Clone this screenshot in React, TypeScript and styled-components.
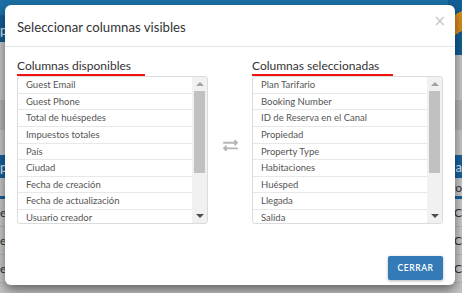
import React from "react";
import styled, { createGlobalStyle } from "styled-components";
import { FaExchangeAlt } from "react-icons/fa";

const GlobalStyle = createGlobalStyle`
  html, body {
    margin: 0;
    padding: 0;
  }
  body {
    width: 462px;
    height: 293px;
    overflow: hidden;
    font-family: "Lato", "Open Sans", sans-serif;
  }
`;

// page behind the dialog (already dimmed by the backdrop)
const Page = styled.div`
  position: relative;
  width: 462px;
  height: 293px;
  background: #c6c6c6;
  overflow: hidden;
`;

const NavBar = styled.div`
  height: 42px;
  background: linear-gradient(#1b70a6 0, #1b70a6 15px, #125f97 15px);
  display: flex;
  align-items: flex-end;
  justify-content: space-between;
  padding-bottom: 4px;
  box-sizing: border-box;
  color: #e8eef4;
  font-size: 13px;
`;

const Ribbon = styled.div`
  width: 14px;
  height: 55px;
  align-self: flex-start;
  background: linear-gradient(150deg, #125f97 0 30%, #d98f1c 30% 62%, #125f97 62%);
`;

const Band = styled.div<{ $h: number; $bg: string }>`
  height: ${(p) => p.$h}px;
  background: ${(p) => p.$bg};
`;

const TableHead = styled.div`
  height: 23px;
  background: #1762a0;
  color: #e8eef4;
  font-size: 13px;
  display: flex;
  align-items: center;
  justify-content: space-between;
`;

const SubHead = styled.div`
  height: 18px;
  background: #c9c9c9;
  border-bottom: 3px solid #1762a0;
  color: #333;
  font-size: 12px;
  display: flex;
  align-items: center;
  justify-content: flex-end;
`;

const Row = styled.div`
  height: 27px;
  background: #cbcbcb;
  border-bottom: 1px solid #b8b8b8;
  color: #333;
  font-size: 12px;
  display: flex;
  align-items: center;
  justify-content: space-between;
`;

// dialog
const Modal = styled.div`
  position: absolute;
  top: 5px;
  left: 5px;
  width: 450px;
  height: 280px;
  background: #fff;
  border-radius: 6px;
  box-shadow: 0 5px 12px rgba(0, 0, 0, 0.5);
  display: flex;
  flex-direction: column;
`;

const Header = styled.div`
  height: 41px;
  padding: 0 9px 0 12px;
  display: flex;
  align-items: center;
  justify-content: space-between;
  border-bottom: 1px solid #e5e5e5;
`;

const Title = styled.div`
  font-size: 13.2px;
  color: #333;
  margin-top: 2px;
`;

const Close = styled.span`
  color: #c8c8c8;
  font-size: 15px;
  line-height: 1;
  margin-top: -9px;
  font-family: "DejaVu Sans", sans-serif;
`;

const Body = styled.div`
  padding: 11px 12px 0;
  display: flex;
  align-items: flex-start;
`;

const Column = styled.div`
  width: 191px;
  display: flex;
  flex-direction: column;
  align-items: flex-start;
`;

const Middle = styled.div`
  flex: 1;
  height: 174px;
  display: flex;
  align-items: center;
  justify-content: center;
  color: #b5b5b5;
  font-size: 15px;
`;

const ColumnTitle = styled.div`
  font-size: 12px;
  line-height: 16px;
  color: #333;
  padding-right: 14px;
  border-bottom: 2px solid #f21414;
`;

const ListBox = styled.div`
  width: 191px;
  height: 148px;
  box-sizing: border-box;
  border: 1px solid #dcdcdc;
  border-radius: 3px;
  display: flex;
  overflow: hidden;
`;

const Items = styled.div`
  flex: 1;
  overflow: hidden;
`;

const Item = styled.div`
  height: 16.65px;
  box-sizing: border-box;
  border-bottom: 1px solid #e8e8e8;
  padding-left: 8px;
  font-size: 9.5px;
  line-height: 15px;
  color: #555;
  white-space: nowrap;
`;

const ScrollTrack = styled.div`
  width: 15px;
  background: #f1f1f1;
  display: flex;
  flex-direction: column;
  align-items: center;
`;

const Arrow = styled.div<{ $down?: boolean }>`
  height: 14px;
  width: 15px;
  display: flex;
  align-items: center;
  justify-content: center;
  &::after {
    content: "";
    border-left: 4px solid transparent;
    border-right: 4px solid transparent;
    ${(p) =>
      p.$down
        ? "border-top: 4px solid #505050;"
        : "border-bottom: 4px solid #a3a3a3;"}
  }
`;

const Thumb = styled.div`
  width: 11px;
  height: 82px;
  background: #c1c1c1;
`;

const Spacer = styled.div`
  flex: 1;
`;

const Footer = styled.div`
  padding: 24px 12px 0;
  display: flex;
  justify-content: flex-end;
`;

const Button = styled.button`
  width: 55px;
  height: 24px;
  border: none;
  border-radius: 2px;
  background: #337ab7;
  color: #fff;
  font-family: "Lato", sans-serif;
  font-size: 8.5px;
  font-weight: 600;
  letter-spacing: 0.6px;
  box-shadow: 0 1px 3px rgba(0, 0, 0, 0.3);
  padding: 0;
`;

const available = [
  "Guest Email",
  "Guest Phone",
  "Total de huéspedes",
  "Impuestos totales",
  "País",
  "Ciudad",
  "Fecha de creación",
  "Fecha de actualización",
  "Usuario creador",
];

const selected = [
  "Plan Tarifario",
  "Booking Number",
  "ID de Reserva en el Canal",
  "Propiedad",
  "Property Type",
  "Habitaciones",
  "Huésped",
  "Llegada",
  "Salida",
];

const ColumnList: React.FC<{ title: string; items: string[] }> = ({ title, items }) => (
  <Column>
    <ColumnTitle>{title}</ColumnTitle>
    <ListBox>
      <Items>
        {items.map((it) => (
          <Item key={it}>{it}</Item>
        ))}
      </Items>
      <ScrollTrack>
        <Arrow />
        <Thumb />
        <Spacer />
        <Arrow $down />
      </ScrollTrack>
    </ListBox>
  </Column>
);

export default function App() {
  return (
    <>
      <GlobalStyle />
      <Page>
        <NavBar>
          <span>p</span>
          <Ribbon />
        </NavBar>
        <Band $h={58} $bg="#c8c8c8" />
        <Band $h={30} $bg="#b6b6b6" />
        <Band $h={25} $bg="#c8c8c8" />
        <TableHead>
          <span>p</span>
          <span>a</span>
        </TableHead>
        <SubHead>
          <span>ro</span>
        </SubHead>
        {[0, 1, 2].map((i) => (
          <Row key={i}>
            <span>er</span>
            <span>-C</span>
          </Row>
        ))}
        <Modal>
          <Header>
            <Title>Seleccionar columnas visibles</Title>
            <Close>×</Close>
          </Header>
          <Body>
            <ColumnList title="Columnas disponibles" items={available} />
            <Middle>
              <FaExchangeAlt />
            </Middle>
            <ColumnList title="Columnas seleccionadas" items={selected} />
          </Body>
          <Footer>
            <Button>CERRAR</Button>
          </Footer>
        </Modal>
      </Page>
    </>
  );
}
